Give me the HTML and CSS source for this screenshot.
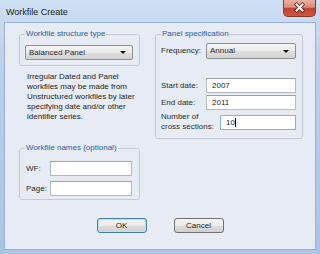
FILE: index.html
```html
<!DOCTYPE html>
<html lang="en">
<head>
    <meta charset="UTF-8">
    <title>Workfile Create</title>
    <link rel="stylesheet" href="styles.css">
</head>
<body>
    <div class="window">
        <div class="titlebar">
            <span class="title">Workfile Create</span>
            <span class="close-btn">
                <svg width="31" height="16" viewBox="0 0 31 16">
                    <path d="M12.5 4.5 L18.5 10.5 M18.5 4.5 L12.5 10.5" stroke="#5a1d16" stroke-width="3.6" stroke-linecap="square"/>
                    <path d="M12.5 4.5 L18.5 10.5 M18.5 4.5 L12.5 10.5" stroke="#ffffff" stroke-width="2" stroke-linecap="square"/>
                </svg>
            </span>
        </div>

        <div class="client">
            <div class="columns">
                <div class="left-col">
                    <fieldset class="group group-type">
                        <legend>Workfile structure type</legend>
                        <div class="combo combo-type">Balanced Panel<span class="arrow"></span></div>
                    </fieldset>

                    <p class="note">Irregular Dated and Panel<br>workfiles may be made from<br>Unstructured workfiles by later<br>specifying date and/or other<br>identifier series.</p>

                    <fieldset class="group group-names">
                        <legend>Workfile names (optional)</legend>
                        <div class="row">
                            <span class="label label-names">WF:</span>
                            <span class="field field-names"></span>
                        </div>
                        <div class="row">
                            <span class="label label-names">Page:</span>
                            <span class="field field-names"></span>
                        </div>
                    </fieldset>
                </div>

                <div class="right-col">
                    <fieldset class="group group-panel">
                        <legend>Panel specification</legend>
                        <div class="row row-freq">
                            <span class="label">Frequency:</span>
                            <div class="combo combo-freq">Annual<span class="arrow"></span></div>
                        </div>
                        <div class="row row-start">
                            <span class="label">Start date:</span>
                            <span class="field field-date">2007</span>
                        </div>
                        <div class="row row-end">
                            <span class="label">End date:</span>
                            <span class="field field-date">2011</span>
                        </div>
                        <div class="row row-number">
                            <span class="label">Number of<br>cross sections:</span>
                            <span class="field field-number focused">10<span class="caret"></span></span>
                        </div>
                    </fieldset>
                </div>
            </div>

            <div class="buttons">
                <button class="btn btn-default">OK</button>
                <button class="btn">Cancel</button>
            </div>
        </div>
    </div>
</body>
</html>
```

FILE: styles.css
```css
* {
    margin: 0;
    padding: 0;
    box-sizing: border-box;
}

body {
    font-family: "Liberation Sans", Arial, sans-serif;
    font-size: 8px;
    color: #1e1e1e;
    background: #ffffff;
}

.window {
    width: 320px;
    height: 254px;
    display: flex;
    flex-direction: column;
    background: linear-gradient(180deg, #cddff2 0%, #b8cfea 30%, #aac4e5 100%);
}

.titlebar {
    height: 22px;
    display: flex;
    justify-content: space-between;
    align-items: flex-start;
}

.title {
    padding: 7px 0 0 6px;
    font-size: 9px;
    line-height: 10px;
    color: #1a1a1a;
}

.close-btn {
    width: 33px;
    height: 17px;
    margin-right: 4px;
    border: 1px solid #83392f;
    border-top: none;
    border-radius: 0 0 5px 5px;
    background: linear-gradient(180deg, #eab0a2 0%, #dc8d7b 45%, #c4412d 52%, #cf563f 100%);
    display: flex;
}

/* client area */
.client {
    flex: 1;
    margin: 0 4px 4px 4px;
    border: 1px solid #97b1d4;
    background: #e7ecf4;
    padding: 6px 0 0 14px;
}

.columns {
    display: flex;
    align-items: flex-start;
    gap: 15px;
}

.left-col {
    width: 121px;
}

.right-col {
    width: 148px;
}

.group {
    border: 1px solid #c3cad6;
    border-radius: 3px;
    padding: 0 6px 5px 5px;
    min-width: 0;
}

.group legend {
    padding: 0 1px;
    line-height: 10px;
    color: #1f5ca6;
}

.combo {
    height: 15px;
    border: 1px solid #8e8f8f;
    border-radius: 2px;
    background: linear-gradient(180deg, #f4f4f4 0%, #ebebeb 50%, #dedede 51%, #d2d2d2 100%);
    padding: 0 6px 0 3px;
    display: flex;
    align-items: center;
    justify-content: space-between;
    line-height: 10px;
}

.arrow {
    width: 0;
    height: 0;
    border-top: 3px solid #111;
    border-left: 3px solid transparent;
    border-right: 3px solid transparent;
}

.combo-type {
    margin-top: 6px;
}

.note {
    margin-top: 6px;
    padding-left: 8px;
    line-height: 10px;
    color: #222;
}

.group-names {
    margin-top: 21px;
    padding-bottom: 3px;
}

.row {
    display: flex;
    align-items: center;
}

.label {
    flex: 1;
    line-height: 10px;
    color: #2a2a2a;
}

.field {
    height: 15px;
    background: #ffffff;
    border: 1px solid #b5b9c2;
    border-top-color: #9da1aa;
    padding-left: 5px;
    line-height: 13px;
    color: #1e1e1e;
}

.group-names .row {
    margin-top: 5px;
}

.group-names .row:first-of-type {
    margin-top: 8px;
}

.label-names {
    padding-left: 1px;
}

.field-names {
    width: 82px;
    flex: none;
    margin-right: 1px;
}

.group-panel {
    padding-bottom: 6px;
}

.row-freq {
    margin-top: 4px;
}

.combo-freq {
    width: 90px;
    height: 16px;
}

.row-start {
    margin-top: 19px;
}

.row-end,
.row-number {
    margin-top: 2px;
}

.field-date {
    width: 90px;
}

.row-number {
    height: 20px;
}

.field-number {
    width: 76px;
}

.focused {
    border-color: #7eb4ea;
}

.caret {
    display: inline-block;
    width: 1px;
    height: 9px;
    background: #000;
    vertical-align: middle;
}

/* bottom buttons */
.buttons {
    display: flex;
    justify-content: center;
    gap: 27px;
    margin-top: 18px;
    padding-right: 14px;
}

.btn {
    width: 50px;
    height: 15px;
    border: 1px solid #707070;
    border-radius: 3px;
    background: linear-gradient(180deg, #f3f3f3 0%, #ebebeb 50%, #dddddd 51%, #cfcfcf 100%);
    font-family: "Liberation Sans", Arial, sans-serif;
    font-size: 8px;
    color: #222;
}

.btn-default {
    border-color: #3c7fb1;
    box-shadow: inset 0 0 0 1px #bfe1f5;
}
```
